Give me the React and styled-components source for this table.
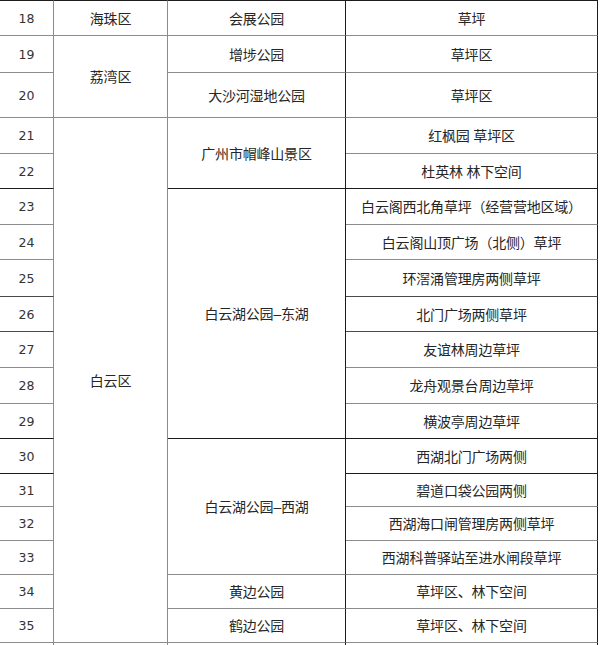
import React from "react";
import styled, { createGlobalStyle } from "styled-components";

const Global = createGlobalStyle`
  html, body { margin: 0; padding: 0; background: #fff; }
  body { font-family: "Liberation Sans", "Noto Sans CJK SC", sans-serif; }
`;

const BLACK = "#1c1c1c";
const DARK = "#4a4a4a";
const GRAY = "#8c8c8c";

const COLS = [54, 114, 178, 252];
const COL_COLORS = [GRAY, GRAY, BLACK, BLACK];

const rows = [
  { n: 18, h: 35, top: BLACK },
  { n: 19, h: 37, top: GRAY },
  { n: 20, h: 45, top: GRAY },
  { n: 21, h: 36, top: GRAY },
  { n: 22, h: 35, top: GRAY },
  { n: 23, h: 36, top: BLACK },
  { n: 24, h: 35, top: GRAY },
  { n: 25, h: 37, top: GRAY },
  { n: 26, h: 35, top: DARK },
  { n: 27, h: 36, top: DARK },
  { n: 28, h: 36, top: GRAY },
  { n: 29, h: 35, top: GRAY },
  { n: 30, h: 35, top: BLACK },
  { n: 31, h: 33, top: BLACK },
  { n: 32, h: 34, top: GRAY },
  { n: 33, h: 34, top: GRAY },
  { n: 34, h: 34, top: GRAY },
  { n: 35, h: 34, top: GRAY },
  { n: "", h: 30, top: GRAY },
];

// [column, startRowIndex, span, text]
const cells = [
  [1, 0, 1, "海珠区"],
  [1, 1, 2, "荔湾区"],
  [1, 3, 15, "白云区"],
  [1, 18, 1, ""],
  [2, 0, 1, "会展公园"],
  [2, 1, 1, "增埗公园"],
  [2, 2, 1, "大沙河湿地公园"],
  [2, 3, 2, "广州市帽峰山景区"],
  [2, 5, 7, "白云湖公园–东湖"],
  [2, 12, 4, "白云湖公园–西湖"],
  [2, 16, 1, "黄边公园"],
  [2, 17, 1, "鹤边公园"],
  [2, 18, 1, ""],
  [3, 0, 1, "草坪"],
  [3, 1, 1, "草坪区"],
  [3, 2, 1, "草坪区"],
  [3, 3, 1, "红枫园 草坪区"],
  [3, 4, 1, "杜英林 林下空间"],
  [3, 5, 1, "白云阁西北角草坪（经营营地区域）"],
  [3, 6, 1, "白云阁山顶广场（北侧）草坪"],
  [3, 7, 1, "环滘涌管理房两侧草坪"],
  [3, 8, 1, "北门广场两侧草坪"],
  [3, 9, 1, "友谊林周边草坪"],
  [3, 10, 1, "龙舟观景台周边草坪"],
  [3, 11, 1, "横波亭周边草坪"],
  [3, 12, 1, "西湖北门广场两侧"],
  [3, 13, 1, "碧道口袋公园两侧"],
  [3, 14, 1, "西湖海口闸管理房两侧草坪"],
  [3, 15, 1, "西湖科普驿站至进水闸段草坪"],
  [3, 16, 1, "草坪区、林下空间"],
  [3, 17, 1, "草坪区、林下空间"],
  [3, 18, 1, ""],
];

const Page = styled.div`
  width: 600px;
  height: 645px;
  overflow: hidden;
  background: #fff;
`;

const Grid = styled.div`
  display: grid;
  width: 598px;
  grid-template-columns: ${COLS.map((c) => `${c}px`).join(" ")};
  grid-template-rows: ${rows.map((r) => `${r.h}px`).join(" ")};
`;

const Cell = styled.div`
  box-sizing: border-box;
  grid-column: ${(p) => p.$col + 1};
  grid-row: ${(p) => p.$row + 1} / span ${(p) => p.$span};
  border-top: 1px solid ${(p) => p.$top};
  border-right: 1px solid ${(p) => p.$right};
  display: flex;
  align-items: center;
  justify-content: center;
  padding-top: 1px;
  font-size: 14px;
  line-height: 16px;
  color: #262626;
  white-space: nowrap;
  letter-spacing: -0.2px;
`;

const NumCell = styled(Cell)`
  font-family: "DejaVu Sans", sans-serif;
  font-size: 12.5px;
  letter-spacing: 0;
  color: #333;
`;

export default function App() {
  return (
    <Page>
      <Global />
      <Grid>
        {rows.map((r, i) => (
          <NumCell key={`n${i}`} $col={0} $row={i} $span={1} $top={r.top} $right={COL_COLORS[0]}>
            {r.n}
          </NumCell>
        ))}
        {cells.map(([c, r, s, t], i) => (
          <Cell key={`c${i}`} $col={c} $row={r} $span={s} $top={rows[r].top} $right={COL_COLORS[c]}>
            {t}
          </Cell>
        ))}
      </Grid>
    </Page>
  );
}
